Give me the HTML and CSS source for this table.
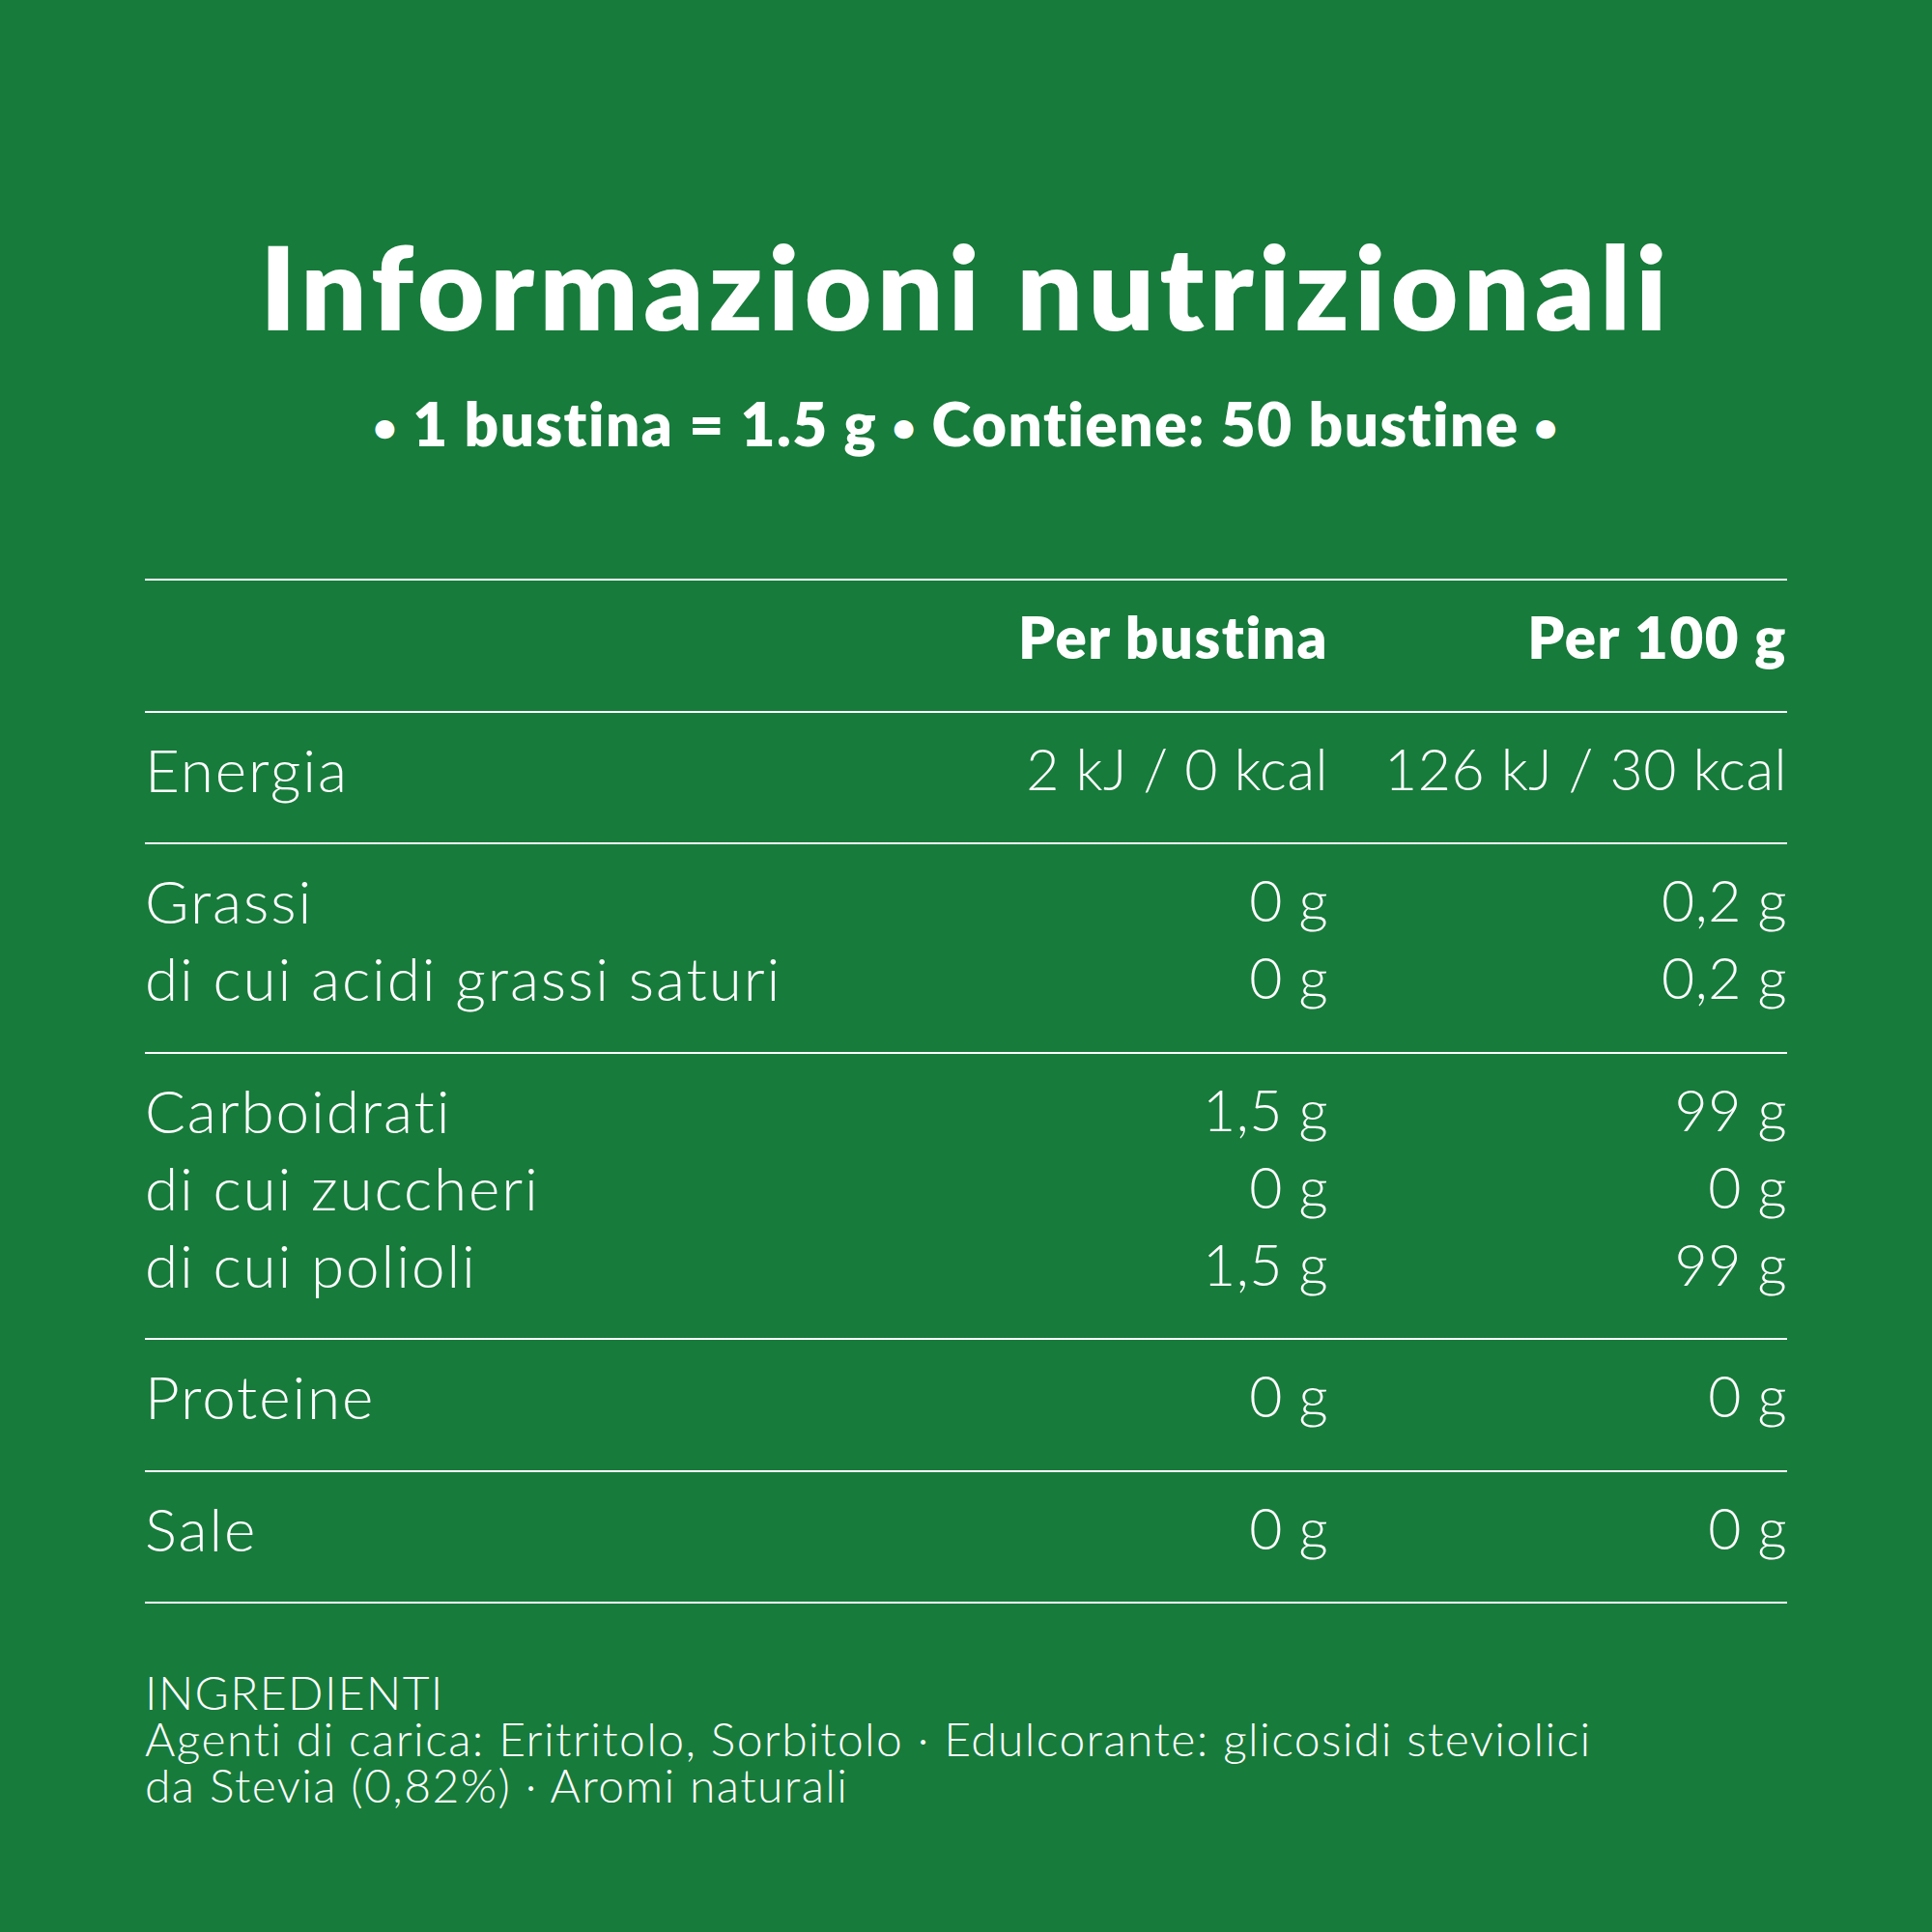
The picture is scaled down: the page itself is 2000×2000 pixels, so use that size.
FILE: index.html
```html
<!DOCTYPE html>
<html lang="it">
<head>
<meta charset="utf-8">
<title>Informazioni nutrizionali</title>
<link rel="stylesheet" href="styles.css">
</head>
<body>
<main class="page">
  <h1 class="title">Informazioni nutrizionali</h1>
  <p class="subtitle"><span class="dot">•</span> 1 bustina = 1.5 g <span class="dot">•</span> Contiene: 50 bustine <span class="dot">•</span></p>

  <div class="table">
    <div class="section head">
      <div class="row">
        <span class="label"></span>
        <span class="val">Per bustina</span>
        <span class="val">Per 100 g</span>
      </div>
    </div>
    <div class="section">
      <div class="row"><span class="label">Energia</span><span class="val">2 kJ / 0 kcal</span><span class="val">126 kJ / 30 kcal</span></div>
    </div>
    <div class="section">
      <div class="row"><span class="label">Grassi</span><span class="val">0 g</span><span class="val">0,2 g</span></div>
      <div class="row"><span class="label">di cui acidi grassi saturi</span><span class="val">0 g</span><span class="val">0,2 g</span></div>
    </div>
    <div class="section">
      <div class="row"><span class="label">Carboidrati</span><span class="val">1,5 g</span><span class="val">99 g</span></div>
      <div class="row"><span class="label">di cui zuccheri</span><span class="val">0 g</span><span class="val">0 g</span></div>
      <div class="row"><span class="label">di cui polioli</span><span class="val">1,5 g</span><span class="val">99 g</span></div>
    </div>
    <div class="section">
      <div class="row"><span class="label">Proteine</span><span class="val">0 g</span><span class="val">0 g</span></div>
    </div>
    <div class="section last">
      <div class="row"><span class="label">Sale</span><span class="val">0 g</span><span class="val">0 g</span></div>
    </div>
  </div>

  <div class="ingredients">
    <p class="ing-title">INGREDIENTI</p>
    <p class="ing-text">Agenti di carica: Eritritolo, Sorbitolo · Edulcorante: glicosidi steviolici<br>da Stevia (0,82%) · Aromi naturali</p>
  </div>
</main>
</body>
</html>
```

FILE: styles.css
```css
html, body {
  margin: 0;
  padding: 0;
  background: #177b3b;
}

.page {
  width: 2000px;
  height: 2000px;
  box-sizing: border-box;
  padding: 224px 150px 0;
  background: #177b3b;
  color: #ffffff;
  font-family: "Lato", "Noto Sans", sans-serif;
  font-variant-ligatures: none;
  font-feature-settings: "liga" 0, "clig" 0;
}

.title {
  margin: 0;
  text-align: center;
  font-size: 120px;
  line-height: 144px;
  font-weight: 800;
  letter-spacing: 5.5px;
}

.subtitle {
  margin: 30px 0 0;
  height: 80px;
  text-align: center;
  font-size: 62px;
  line-height: 80px;
  font-weight: 800;
  letter-spacing: 1.5px;
}

.dot {
  font-size: 40px;
  line-height: 0;
  vertical-align: 6px;
}

.table {
  margin-top: 121px;
  border-bottom: 2px solid #ffffff;
}

.section {
  border-top: 2px solid #ffffff;
  padding: 18px 0 36.5px;
}

.row {
  display: grid;
  grid-template-columns: 1fr 400px 475px;
  font-size: 62px;
  line-height: 80px;
  font-weight: 300;
}

.label {
  letter-spacing: 1.9px;
}

.val {
  text-align: right;
  white-space: nowrap;
  font-size: 59px;
  letter-spacing: 0.5px;
}

.head .row {
  font-weight: 800;
}

.head .val {
  font-size: 60px;
  letter-spacing: 1.5px;
}

.ingredients {
  margin-top: 68px;
  font-size: 48px;
  line-height: 48px;
  font-weight: 300;
  letter-spacing: 1.4px;
}

.ingredients p {
  margin: 0;
}
```
